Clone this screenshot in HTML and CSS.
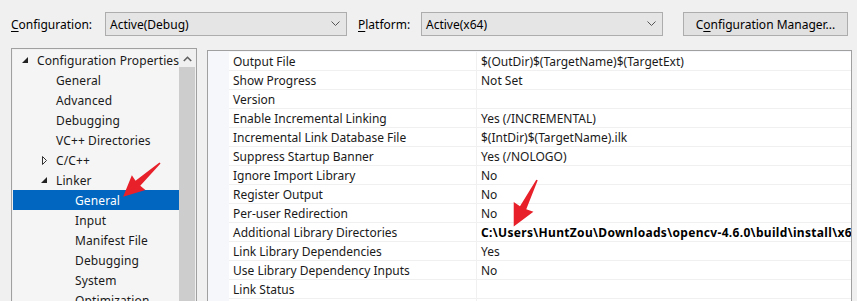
FILE: index.html
```html
<!DOCTYPE html>
<html>
<head>
<meta charset="utf-8">
<link rel="stylesheet" href="styles.css">
</head>
<body>
<div class="topbar">
  <span class="label"><u>C</u>onfiguration:</span>
  <div class="combo combo-config"><span>Active(Debug)</span>
    <svg class="chev" width="9" height="6" viewBox="0 0 9 6"><path d="M0.5 0.5 L4.5 4.5 L8.5 0.5" fill="none" stroke="#555" stroke-width="1"/></svg>
  </div>
  <span class="label label-platform"><u>P</u>latform:</span>
  <div class="combo combo-platform"><span>Active(x64)</span>
    <svg class="chev" width="9" height="6" viewBox="0 0 9 6"><path d="M0.5 0.5 L4.5 4.5 L8.5 0.5" fill="none" stroke="#555" stroke-width="1"/></svg>
  </div>
  <button class="btn">C<u>o</u>nfiguration Manager...</button>
</div>
<div class="main">
  <div class="tree">
    <div class="tree-list">
      <div class="node l0"><span class="tog"><svg width="6" height="6" viewBox="0 0 6 6"><polygon points="6,0 6,6 0,6" fill="#222"/></svg></span><span class="txt">Configuration Properties</span></div>
      <div class="node l1"><span class="tog"></span><span class="txt">General</span></div>
      <div class="node l1"><span class="tog"></span><span class="txt">Advanced</span></div>
      <div class="node l1"><span class="tog"></span><span class="txt">Debugging</span></div>
      <div class="node l1"><span class="tog"></span><span class="txt">VC++ Directories</span></div>
      <div class="node l1"><span class="tog tog-c"><svg width="5" height="9" viewBox="0 0 5 9"><polygon points="0.5,0.5 4.5,4.5 0.5,8.5" fill="none" stroke="#333" stroke-width="1"/></svg></span><span class="txt">C/C++</span></div>
      <div class="node l1"><span class="tog tog-e"><svg width="6" height="6" viewBox="0 0 6 6"><polygon points="6,0 6,6 0,6" fill="#222"/></svg></span><span class="txt">Linker</span></div>
      <div class="node l2 sel"><span class="tog"></span><span class="txt">General</span></div>
      <div class="node l2"><span class="tog"></span><span class="txt">Input</span></div>
      <div class="node l2"><span class="tog"></span><span class="txt">Manifest File</span></div>
      <div class="node l2"><span class="tog"></span><span class="txt">Debugging</span></div>
      <div class="node l2"><span class="tog"></span><span class="txt">System</span></div>
      <div class="node l2"><span class="tog"></span><span class="txt">Optimization</span></div>
    </div>
    <div class="scrollbar">
      <div class="sb-up"><svg width="9" height="6" viewBox="0 0 9 6"><path d="M0.8 5 L4.5 1.3 L8.2 5" fill="none" stroke="#606060" stroke-width="1.6"/></svg></div>
      <div class="sb-thumb"></div>
    </div>
  </div>
  <div class="grid">
    <div class="row"><div class="gutter"></div><div class="name">Output File</div><div class="val">$(OutDir)$(TargetName)$(TargetExt)</div></div>
    <div class="row"><div class="gutter"></div><div class="name">Show Progress</div><div class="val">Not Set</div></div>
    <div class="row"><div class="gutter"></div><div class="name">Version</div><div class="val"></div></div>
    <div class="row"><div class="gutter"></div><div class="name">Enable Incremental Linking</div><div class="val">Yes (/INCREMENTAL)</div></div>
    <div class="row"><div class="gutter"></div><div class="name">Incremental Link Database File</div><div class="val">$(IntDir)$(TargetName).ilk</div></div>
    <div class="row"><div class="gutter"></div><div class="name">Suppress Startup Banner</div><div class="val">Yes (/NOLOGO)</div></div>
    <div class="row"><div class="gutter"></div><div class="name">Ignore Import Library</div><div class="val">No</div></div>
    <div class="row"><div class="gutter"></div><div class="name">Register Output</div><div class="val">No</div></div>
    <div class="row"><div class="gutter"></div><div class="name">Per-user Redirection</div><div class="val">No</div></div>
    <div class="row"><div class="gutter"></div><div class="name">Additional Library Directories</div><div class="val bold">C:\Users\HuntZou\Downloads\opencv-4.6.0\build\install\x64</div></div>
    <div class="row"><div class="gutter"></div><div class="name">Link Library Dependencies</div><div class="val">Yes</div></div>
    <div class="row"><div class="gutter"></div><div class="name">Use Library Dependency Inputs</div><div class="val">No</div></div>
    <div class="row"><div class="gutter"></div><div class="name">Link Status</div><div class="val"></div></div>
    <div class="row"><div class="gutter"></div><div class="name"></div><div class="val"></div></div>
  </div>
</div>
<svg class="arrow arrow-tree" width="60" height="60" viewBox="0 0 60 60">
  <g transform="translate(37,6) rotate(137.5)">
    <polygon points="0,-0.8 30,-3.5 29,-10 50,0 29,10 30,3.5 0,0.8" fill="#e8202a"/>
  </g>
</svg>
<svg class="arrow arrow-grid" width="60" height="60" viewBox="0 0 60 60">
  <g transform="translate(33,2) rotate(116.6)">
    <polygon points="0,-0.8 31,-3.5 30,-11 52,0 30,11 31,3.5 0,0.8" fill="#e8202a"/>
  </g>
</svg>
</body>
</html>
```
FILE: styles.css
```css
html, body {
  margin: 0;
  padding: 0;
}
body {
  width: 857px;
  height: 301px;
  overflow: hidden;
  background: #f0f0f0;
  font-family: "Noto Sans", "Open Sans", sans-serif;
  font-size: 12px;
  color: #000;
  position: relative;
}
u {
  text-decoration: underline;
  text-underline-offset: 2px;
}
.topbar {
  display: flex;
  align-items: center;
  height: 48px;
  padding-left: 11px;
  box-sizing: border-box;
}
.label {
  width: 94px;
  white-space: nowrap;
}
.label-platform {
  width: 63px;
  margin-left: 11px;
}
.combo {
  width: 242px;
  height: 24px;
  box-sizing: border-box;
  border: 1px solid #adadad;
  background: #e5e5e5;
  display: flex;
  align-items: center;
  justify-content: space-between;
  padding: 0 6px 0 4px;
}
.chev {
  display: block;
}
.btn {
  margin-left: 20px;
  width: 165px;
  height: 24px;
  box-sizing: border-box;
  border: 1px solid #adadad;
  background: #e1e1e1;
  font-family: inherit;
  font-size: 12px;
  color: #000;
  padding: 0;
}
.main {
  display: flex;
  align-items: flex-start;
}
.tree {
  margin-left: 11px;
  width: 186px;
  height: 270px;
  box-sizing: border-box;
  border: 1px solid #a0a0a0;
  background: #f0f0f0;
  display: flex;
  padding: 1px 1px 0 1px;
}
.tree-list {
  width: 166px;
  background: #f5f5f5;
  overflow: hidden;
}
.node {
  height: 20px;
  display: flex;
  align-items: center;
  white-space: nowrap;
  color: #1a1a1a;
  letter-spacing: 0.12px;
}
.node.l0 { padding-left: 8px; }
.node.l1 { padding-left: 27px; }
.node.l2 { padding-left: 46px; }
.tog {
  width: 16px;
  flex: none;
  display: flex;
  align-items: center;
  padding-left: 1px;
  box-sizing: border-box;
}
.tog svg { display: block; }
.tog-c { padding-left: 2px; }
.node.sel {
  background: #0066bf;
  color: #fff;
}
.scrollbar {
  width: 16px;
  flex: none;
  display: flex;
  flex-direction: column;
}
.sb-up {
  height: 17px;
  display: flex;
  align-items: center;
  justify-content: center;
}
.sb-up svg { display: block; }
.sb-thumb {
  flex: 1;
  background: #cdcdcd;
}
.grid {
  margin-left: 10px;
  margin-top: 2px;
  width: 645px;
  height: 260px;
  box-sizing: border-box;
  border: 1px solid #a0a0a0;
  background: #f5f7fb;
  padding-top: 1px;
}
.row {
  display: grid;
  grid-template-columns: 21px 248px 1fr;
  height: 19px;
}
.gutter {
  background: #f5f7fb;
}
.name, .val {
  background: #fff;
  border-bottom: 1px solid #f0f0f0;
  padding-left: 4px;
  white-space: nowrap;
  overflow: hidden;
  line-height: 19px;
  color: #1a1a1a;
}
.name {
  border-right: 1px solid #f0f0f0;
}
.val.bold {
  font-weight: bold;
  color: #000;
  letter-spacing: 0.32px;
}
.arrow {
  position: absolute;
}
.arrow-tree {
  left: 123px;
  top: 157px;
}
.arrow-grid {
  left: 504px;
  top: 178px;
}
```
